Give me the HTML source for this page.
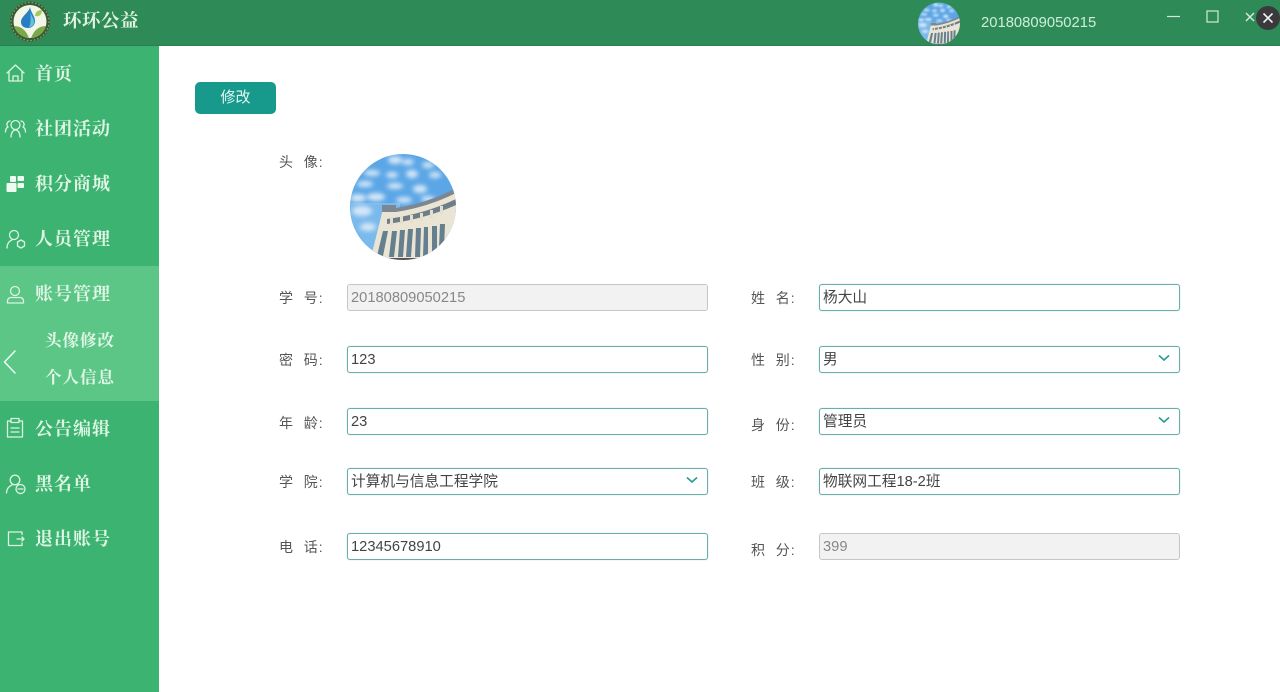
<!DOCTYPE html>
<html lang="zh">
<head>
<meta charset="utf-8">
<title>环环公益</title>
<style>
html,body{margin:0;padding:0;background:#fff}
body{position:relative;width:1280px;height:692px;overflow:hidden;font-family:"Liberation Sans","Noto Sans CJK SC",sans-serif;color:#555}
.a{position:absolute}
.top{left:0;top:0;width:1280px;height:46px;background:#2e8b57;border-bottom:1px solid #2a7d50;box-sizing:border-box}
.side{left:0;top:46px;width:159px;height:646px;background:#3cb371}
.active{left:0;top:266px;width:159px;height:135px;background:#5cc687}
.nav{left:35px;height:24px;line-height:24px;font-family:"Liberation Serif","Noto Serif CJK SC",serif;font-weight:700;font-size:18px;letter-spacing:1px;color:#e0f6e5;white-space:nowrap}
.sub{left:45px;height:22px;line-height:22px;font-family:"Liberation Serif","Noto Serif CJK SC",serif;font-weight:700;font-size:16.5px;letter-spacing:1px;color:#e0f6e5;white-space:nowrap}
.lab{height:20px;line-height:20px;font-size:14px;letter-spacing:1px;color:#555;white-space:pre}
.f{box-sizing:border-box;width:361px;height:27px;border:1px solid #68aeab;border-radius:3px;background:#fff;font-size:14.7px;line-height:26px;padding-left:3px;color:#444;white-space:nowrap;box-shadow:0 0 1px #9accc9}
.d{background:#f2f2f2;border-color:#c6c6c6;color:#888;box-shadow:none}
.chev{position:absolute;right:9px;top:7px;width:12px;height:8px;fill:none;stroke:#2a9d8f;stroke-width:1.6}
</style>
</head>
<body>
<svg width="0" height="0" style="position:absolute">
<defs>
<clipPath id="c2"><circle cx="53" cy="54" r="53"/></clipPath>
<filter id="b" x="-20%" y="-20%" width="140%" height="140%"><feGaussianBlur stdDeviation="2.4"/></filter>
<symbol id="av" viewBox="0 0 106 108">
<g clip-path="url(#c2)">
<rect width="106" height="108" fill="#5ba6e6"/>
<rect y="50" width="50" height="58" fill="#7ab9ec"/>
<g fill="#d6e8f7" filter="url(#b)">
<ellipse cx="45" cy="7" rx="7" ry="4"/><ellipse cx="58" cy="9" rx="6" ry="3"/><ellipse cx="78" cy="12" rx="6" ry="3"/>
<ellipse cx="22" cy="20" rx="8" ry="3"/><ellipse cx="42" cy="22" rx="6" ry="3"/><ellipse cx="62" cy="21" rx="6" ry="4"/><ellipse cx="85" cy="22" rx="6" ry="3"/>
<ellipse cx="15" cy="31" rx="8" ry="3"/><ellipse cx="45" cy="33" rx="8" ry="3"/><ellipse cx="70" cy="36" rx="7" ry="4"/>
<ellipse cx="8" cy="45" rx="8" ry="4"/><ellipse cx="26" cy="44" rx="9" ry="4"/><ellipse cx="54" cy="47" rx="8" ry="3"/><ellipse cx="78" cy="46" rx="7" ry="3"/>
<ellipse cx="12" cy="58" rx="10" ry="5"/><ellipse cx="18" cy="74" rx="8" ry="4"/>
</g>
<path d="M20 108 33 56h13Q78 50 106 36v72z" fill="#e9e4d3"/>
<path d="M32 52h14v3Q78 50 106 35v5Q78 54 46 59H32z" fill="#7c8792"/>
<path d="M37 66Q75 61 106 46v6Q75 66 37 71z" fill="#6f7d88"/>
<g fill="#e4dfcd"><path d="M40 64h3v8h-3zM50 63h3v8h-3zM60 62h3v8h-3zM70 60h3v8h-3zM80 57h3v8h-3zM90 53h3v8h-3z"/></g>
<g fill="#657f8e">
<path d="M33 78h5l-5 25h-6z"/><path d="M42 78h5l-3 26h-5z"/><path d="M50 77h5l-2 27h-5z"/><path d="M58 76h5l-2 28h-5z"/><path d="M66 75h5l-1 29h-5z"/><path d="M74 74h4v30h-5z"/><path d="M82 73h5v31h-5z"/><path d="M90 71h5l-1 24h-5z"/>
</g>
<path d="M22 105h68v3H22z" fill="#555"/>
</g>
</symbol>
</defs>
</svg>

<div class="a top"></div>
<div class="a side"></div>
<div class="a active"></div>

<svg class="a" style="left:9px;top:1px" width="42" height="42" viewBox="0 0 42 42">
<circle cx="21" cy="20.500" r="20" fill="#3a5a34"/>
<circle cx="21" cy="20.500" r="19" fill="none" stroke="#9fb27a" stroke-width="1" stroke-dasharray="1.500 2"/>
<circle cx="21" cy="20.500" r="16.500" fill="#f2f6e6"/>
<path d="M5 25c7 0 12 4 15 12-8-1-13-5-15-12zM37 25c-7 0-12 4-15 12 8-1 13-5 15-12z" fill="#7ba84b"/>
<path d="M21 6c-1 6-9 9-9 15 0 4 3 6 7 6s7-3 7-7c0-5-4-8-5-14z" fill="#2a7fc4"/>
<path d="M21 10c1 5 4 7 4 11 0 3-2 5-5 5 2-3 2-10 1-16z" fill="#63c3dd"/>
<path d="M26 15c0-4 3-6 7-6 0 4-2 7-7 6z" fill="#a3c95a"/>
</svg>
<div class="a" style="left:63px;top:10px;height:24px;line-height:24px;font-family:'Liberation Serif','Noto Serif CJK SC',serif;font-weight:700;font-size:18.5px;letter-spacing:.5px;color:#e0f3e2;white-space:nowrap">环环公益</div>

<svg class="a" style="left:918px;top:2px" width="42" height="43"><use href="#av" width="42" height="43"/></svg>
<div class="a" style="left:981px;top:13px;height:20px;line-height:20px;font-size:14.8px;color:#cfeeda">20180809050215</div>

<svg class="a" style="left:1160px;top:5px" width="120" height="26" viewBox="0 0 120 26" fill="none" stroke="#d2eadb" stroke-width="1.200">
<path d="M7 11.500H20"/>
<rect x="47" y="6" width="11" height="11"/>
<path d="M86 8 94 16M94 8 86 16" stroke-width="1.500"/>
</svg>
<svg class="a" style="left:1256px;top:5px" width="24" height="26" viewBox="0 0 24 26">
<circle cx="12" cy="13" r="12" fill="#3a3a3c"/>
<path d="M7.500 8.500 16.500 17.500M16.500 8.500 7.500 17.500" stroke="#f3f3f3" stroke-width="1.600" fill="none"/>
</svg>

<svg class="a" style="left:0;top:0" width="30" height="692" viewBox="0 0 30 692" fill="none" stroke="#dcf4e2" stroke-width="1.300" stroke-linecap="round" stroke-linejoin="round">
<path d="M7 73 15.500 65 24 73M9 71v10h13V71M13 81v-5h5v5"/>
<circle cx="15.500" cy="125" r="4.500"/>
<path d="M11 137c0-4 2-7 4.500-7s4.500 3 4.500 7M10 121a3.500 3.500 0 0 0-2 6c-2 1-2.500 3-2.500 5M21 121a3.500 3.500 0 0 1 2 6c2 1 2.500 3 2.500 5"/>
<g fill="#eefbf0" stroke="none"><rect x="10" y="176" width="6" height="6" rx="1"/><rect x="17.500" y="176" width="6.500" height="5" rx="1"/><rect x="17.500" y="183" width="6.500" height="5" rx="1"/><rect x="6.500" y="183" width="10" height="9" rx="1"/></g>
<circle cx="14" cy="235" r="4.500"/>
<path d="M7 248c0-4 2-7 5-8"/>
<path d="M21 240l3.500 2v4l-3.500 2-3.500-2v-4z"/>
<circle cx="15" cy="291" r="4.500"/>
<path d="M7.500 303v-2c0-2 1.500-3.500 3.500-3.500h9c2 0 3.500 1.500 3.500 3.500v2z"/>
<path d="M11 421H7.500v16h15v-16H19"/>
<path d="M11 418.500h8v4h-8z" fill="#3cb371"/>
<path d="M11 428h8M11 432h8"/>
<circle cx="15" cy="480" r="4.800"/>
<path d="M6.500 493c0-4 2.500-7 5.500-8"/>
<circle cx="20.500" cy="489" r="4.500"/>
<path d="M18 489h5"/>
<path d="M22 534.500V532H8.500v13.500H22V543"/>
<path d="M17 539h7M22 537l2 2-2 2"/>
<path d="M15 351 4.500 362 15 373" stroke="#f0fbf2" stroke-width="1.500"/>
</svg>

<div class="a nav" style="top:62px">首页</div>
<div class="a nav" style="top:117px">社团活动</div>
<div class="a nav" style="top:172px">积分商城</div>
<div class="a nav" style="top:227px">人员管理</div>
<div class="a nav" style="top:282px">账号管理</div>
<div class="a sub" style="top:330px">头像修改</div>
<div class="a sub" style="top:367px">个人信息</div>
<div class="a nav" style="top:417px">公告编辑</div>
<div class="a nav" style="top:472px">黑名单</div>
<div class="a nav" style="top:527px">退出账号</div>

<div class="a" style="left:195px;top:82px;width:81px;height:32px;background:#179a8b;border-radius:5px;color:#e4f7f3;font-size:15px;line-height:32px;text-align:center">修改</div>

<div class="a lab" style="left:279px;top:152px">头 &nbsp;像:</div>
<svg class="a" style="left:350px;top:153px" width="106" height="108"><use href="#av" width="106" height="108"/></svg>

<div class="a lab" style="left:279px;top:288px">学 &nbsp;号:</div>
<div class="a f d" style="left:347px;top:284px">20180809050215</div>
<div class="a lab" style="left:279px;top:350px">密 &nbsp;码:</div>
<div class="a f" style="left:347px;top:346px">123</div>
<div class="a lab" style="left:279px;top:413px">年 &nbsp;龄:</div>
<div class="a f" style="left:347px;top:408px">23</div>
<div class="a lab" style="left:279px;top:472px">学 &nbsp;院:</div>
<div class="a f" style="left:347px;top:468px">计算机与信息工程学院<svg class="chev" viewBox="0 0 12 8"><path d="M1 1.500 6 6l5-4.500"/></svg></div>
<div class="a lab" style="left:279px;top:537px">电 &nbsp;话:</div>
<div class="a f" style="left:347px;top:533px">12345678910</div>

<div class="a lab" style="left:751px;top:288px">姓 &nbsp;名:</div>
<div class="a f" style="left:819px;top:284px">杨大山</div>
<div class="a lab" style="left:751px;top:350px">性 &nbsp;别:</div>
<div class="a f" style="left:819px;top:346px">男<svg class="chev" viewBox="0 0 12 8"><path d="M1 1.500 6 6l5-4.500"/></svg></div>
<div class="a lab" style="left:751px;top:415px">身 &nbsp;份:</div>
<div class="a f" style="left:819px;top:408px">管理员<svg class="chev" viewBox="0 0 12 8"><path d="M1 1.500 6 6l5-4.500"/></svg></div>
<div class="a lab" style="left:751px;top:472px">班 &nbsp;级:</div>
<div class="a f" style="left:819px;top:468px">物联网工程18-2班</div>
<div class="a lab" style="left:751px;top:540px">积 &nbsp;分:</div>
<div class="a f d" style="left:819px;top:533px">399</div>
</body>
</html>
